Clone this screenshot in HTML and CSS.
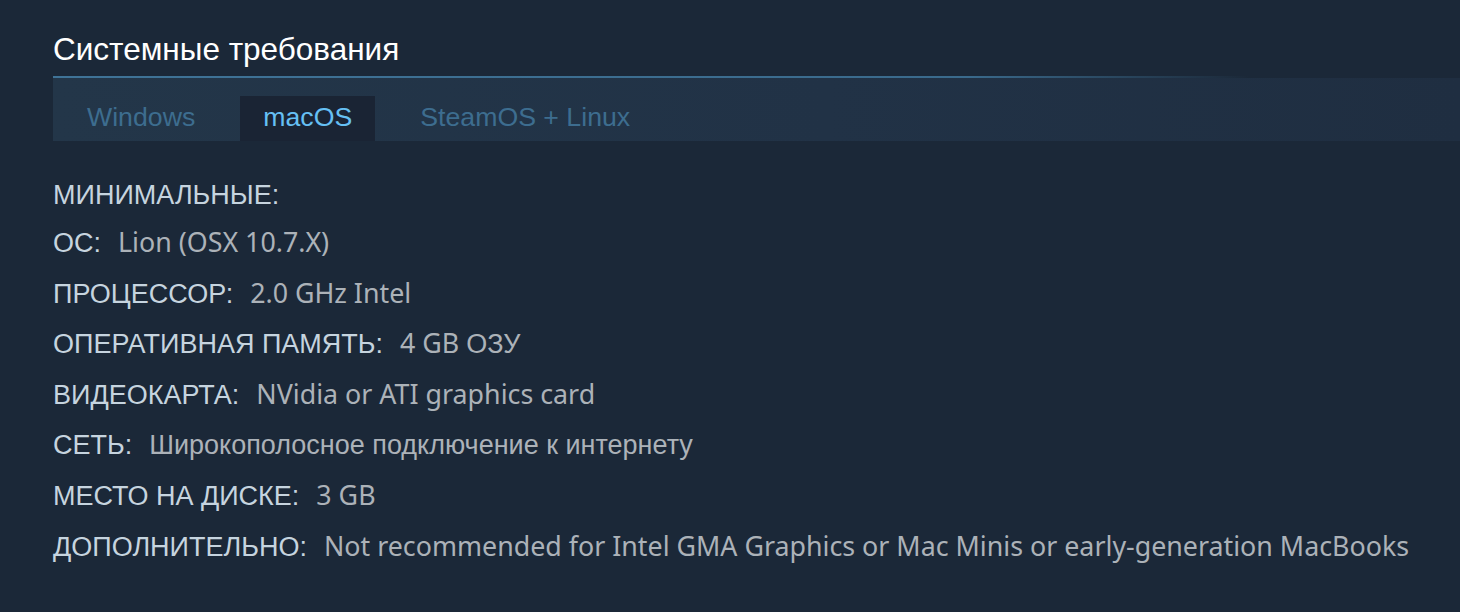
FILE: index.html
```html
<!DOCTYPE html>
<html lang="ru">
<head>
<meta charset="utf-8">
<link rel="stylesheet" href="styles.css">
</head>
<body>
<section class="sysreq">
  <h2 class="sysreq-title">Системные требования</h2>
  <div class="tabs">
    <div class="tab">Windows</div>
    <div class="tab tab-active">macOS</div>
    <div class="tab">SteamOS + Linux</div>
  </div>
  <ul class="reqs">
    <li class="reqs-head">МИНИМАЛЬНЫЕ:</li>
    <li><span class="lbl">ОС:</span><span class="val">Lion (OSX 10.7.X)</span></li>
    <li><span class="lbl">ПРОЦЕССОР:</span><span class="val">2.0 GHz Intel</span></li>
    <li><span class="lbl">ОПЕРАТИВНАЯ ПАМЯТЬ:</span><span class="val">4 GB <span class="cyr">ОЗУ</span></span></li>
    <li><span class="lbl">ВИДЕОКАРТА:</span><span class="val">NVidia or ATI graphics card</span></li>
    <li><span class="lbl">СЕТЬ:</span><span class="val"><span class="cyr">Широкополосное подключение к интернету</span></span></li>
    <li><span class="lbl">МЕСТО НА ДИСКЕ:</span><span class="val">3 GB</span></li>
    <li><span class="lbl">ДОПОЛНИТЕЛЬНО:</span><span class="val">Not recommended for Intel GMA Graphics or Mac Minis or early-generation MacBooks</span></li>
  </ul>
</section>
</body>
</html>
```
FILE: styles.css
```css
html, body {
  margin: 0;
  padding: 0;
  background: #1b2838;
  height: 100%;
}
body {
  font-family: "Liberation Sans", Arial, sans-serif;
  overflow: hidden;
}
.sysreq {
  padding: 31px 0 0 53px;
}
.sysreq-title {
  margin: 0;
  font-weight: normal;
  font-size: 31.5px;
  line-height: 36px;
  color: #ffffff;
  padding-bottom: 11px;
  background: linear-gradient(to right, #3f7397 0%, #3a6a8c 65%, rgba(58,106,140,0) 85%) left bottom / 100% 2px no-repeat;
}
.tabs {
  display: flex;
  gap: 22px;
  height: 63px;
  align-items: flex-end;
  padding-left: 11px;
  background: linear-gradient(to right, #233649 0%, #213246 55%, #1f2e41 100%);
}
.tab {
  height: 45px;
  line-height: 43px;
  padding: 0 23px;
  font-size: 26.7px;
  color: #3d6d8f;
}
.tab-active {
  background: #1a2434;
  color: #66c0f4;
}
.reqs {
  list-style: none;
  margin: 0;
  padding: 31px 0 0 0;
}
.reqs li {
  font-size: 27px;
  line-height: 50.6px;
  white-space: nowrap;
  color: #c6d4df;
}
.reqs .reqs-head {
  line-height: 46px;
}
.lbl {
  color: #c6d4df;
  margin-right: 17px;
}
.val {
  font-family: "Noto Sans", "Open Sans", sans-serif;
  font-size: 26.8px;
  line-height: 1;
  color: #acb2b8;
}
.cyr {
  font-family: "Liberation Sans", Arial, sans-serif;
  font-size: 27px;
}
```
